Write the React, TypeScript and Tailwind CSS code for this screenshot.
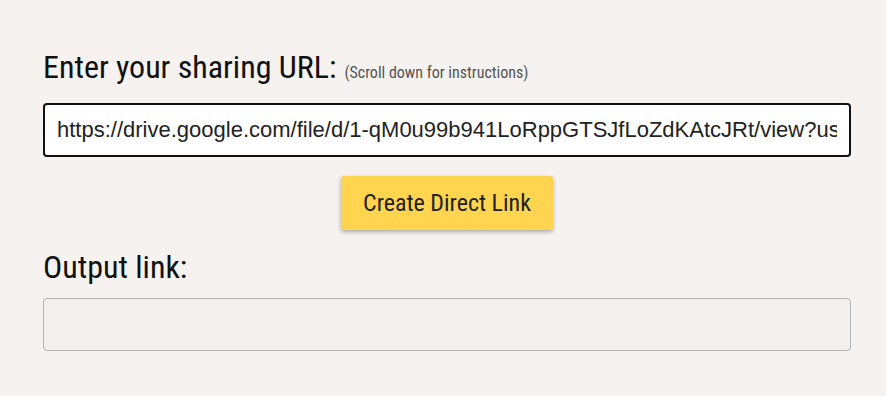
import React from 'react';

const condensed = {
  fontFamily: '"Roboto Condensed", "Liberation Sans Narrow", Roboto, sans-serif',
};

export default function App() {
  const url =
    'https://drive.google.com/file/d/1-qM0u99b941LoRppGTSJfLoZdKAtcJRt/view?usp=sharing';

  return (
    <main className="min-h-[396px] w-full bg-[#f5f2ef] pt-[48px]">
      <section className="mx-[43px] flex w-[808px] flex-col">
        <label
          className="flex items-baseline gap-[8px] text-[32px] leading-[38px] text-[#111] [font-stretch:condensed]"
          style={condensed}
        >
          Enter your sharing URL:
          <span className="text-[16px] text-[#555]">(Scroll down for instructions)</span>
        </label>
        <input
          readOnly
          value={url}
          className="mt-[11px] h-[54px] w-full rounded-[4px] border-2 border-[#111] bg-white px-[12px] font-['Liberation_Sans',Arial,sans-serif] text-[22px] text-[#222] outline-none"
        />
        <div className="mt-[19px] flex justify-center">
          <button
            className="h-[54px] w-[212px] rounded-[3px] bg-[#ffd54f] text-[24px] text-[#222] shadow-[0_2px_4px_rgba(0,0,0,0.3)] [font-stretch:condensed]"
            style={condensed}
          >
            Create Direct Link
          </button>
        </div>
        <h2
          className="mt-[18px] text-[32px] leading-[38px] text-[#111] [font-stretch:condensed]"
          style={condensed}
        >
          Output link:
        </h2>
        <div className="mt-[12px] h-[53px] w-full rounded-[4px] border border-[#b3b3b3] bg-[#f1f0ee]" />
      </section>
    </main>
  );
}
